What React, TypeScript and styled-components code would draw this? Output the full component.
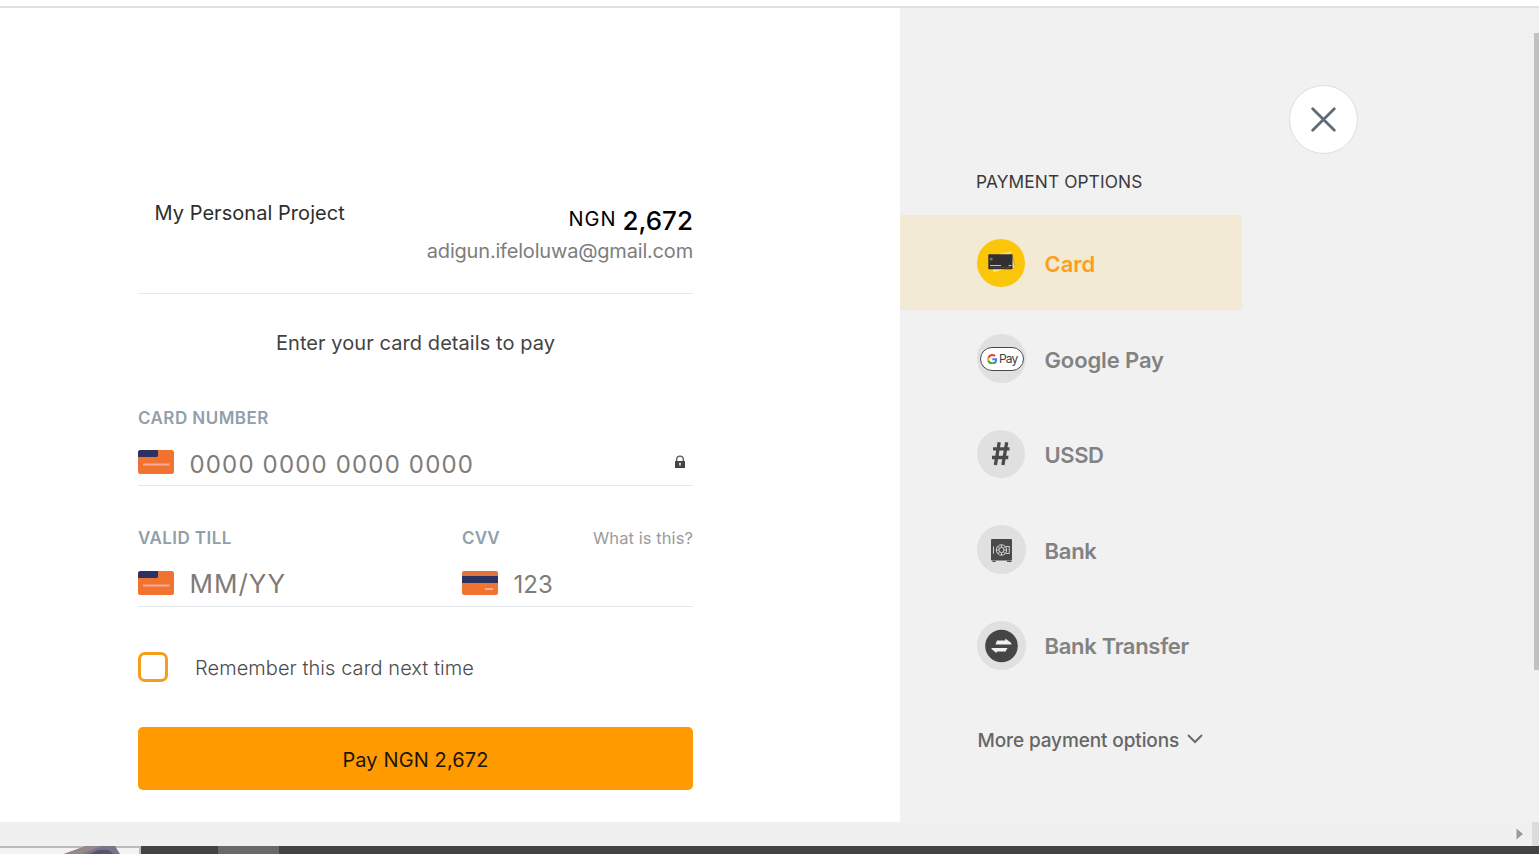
import React from 'react';
import styled, { createGlobalStyle } from 'styled-components';

const Global = createGlobalStyle`
  * { box-sizing: border-box; }
  html, body { margin: 0; height: 100%; overflow: hidden; }
  body { background: #fff; font-family: Inter, "Open Sans", sans-serif; }
  button { font: inherit; border: 0; padding: 0; background: none; text-align: left; }
  svg { display: block; flex: none; }
`;

const Page = styled.div`
  width: 1539px;
  height: 854px;
  display: flex;
  flex-direction: column;
  overflow: hidden;
`;

const TopStrip = styled.div`
  flex: none;
  height: 8px;
  background: #fff;
  border-bottom: 2px solid #e1e1e1;
`;

const Main = styled.main`
  flex: none;
  height: 814px;
  display: flex;
  background: #f1f1f1;
`;

const PayPanel = styled.section`
  width: 900px;
  background: #fff;
  padding: 186px 207px 0 138px;
  display: flex;
  flex-direction: column;
`;

const Text = styled.span<{ $size: number; $weight?: number; $color: string; $track?: number; $line?: number }>`
  font-size: ${p => p.$size}px;
  font-weight: ${p => p.$weight ?? 400};
  color: ${p => p.$color};
  letter-spacing: ${p => p.$track ?? 0}px;
  line-height: ${p => p.$line ?? 30}px;
  white-space: pre;
`;

const Summary = styled.header`
  height: 100px;
  display: flex;
  justify-content: space-between;
  align-items: flex-start;
  border-bottom: 1px solid #e6e8ea;
`;

const Merchant = styled.div`
  padding: 4px 0 0 16.5px;
  display: flex;
`;

const Totals = styled.div`
  padding-top: 11px;
  display: flex;
  flex-direction: column;
  align-items: flex-end;
`;

const Amount = styled.div`
  display: flex;
  align-items: flex-start;
  gap: 6px;
  height: 31px;
`;

const Currency = styled.div`
  display: flex;
  height: 28px;
`;

const Prompt = styled.p`
  margin: 34px 0 0;
  height: 30px;
  display: flex;
  justify-content: center;
`;

const Fields = styled.div<{ $top: number }>`
  margin-top: ${p => p.$top}px;
  display: flex;
`;

const Field = styled.label<{ $width?: number; $height: number }>`
  width: ${p => (p.$width ? `${p.$width}px` : 'auto')};
  flex: ${p => (p.$width ? 'none' : '1')};
  height: ${p => p.$height}px;
  display: flex;
  flex-direction: column;
  border-bottom: 1px solid #e2e8ec;
`;

const FieldHead = styled.div`
  height: 20px;
  display: flex;
  justify-content: space-between;
`;

const FieldBody = styled.div<{ $top: number }>`
  margin-top: ${p => p.$top}px;
  height: 24px;
  display: flex;
  align-items: center;
`;

const Value = styled.div<{ $drop?: number }>`
  flex: 1;
  padding: ${p => p.$drop ?? 0}px 0 0 15.5px;
  display: flex;
`;

const LockSlot = styled.div`
  width: 19px;
  display: flex;
`;

const Remember = styled.label`
  margin-top: 45px;
  height: 30px;
  display: flex;
  align-items: center;
  gap: 27px;
`;

const RememberLabel = styled.span`
  display: flex;
  padding-top: 2px;
`;

const Checkbox = styled.span`
  width: 30px;
  height: 30px;
  border: 3px solid #f59e1b;
  border-radius: 7px;
  background: #fff;
`;

const PayButton = styled.button`
  && {
    margin-top: 45px;
    height: 63px;
    padding-top: 3px;
    display: flex;
    align-items: center;
    justify-content: center;
    border-radius: 5px;
    background: #ff9b00;
  }
`;

const OptionsPanel = styled.aside`
  width: 342px;
  padding-top: 159px;
  display: flex;
  flex-direction: column;
`;

const OptionsTitle = styled.h2`
  margin: 0;
  height: 48px;
  padding-left: 76px;
  display: flex;
`;

const Option = styled.button<{ $active?: boolean }>`
  && {
    height: ${p => (p.$active ? 95 : 95.5)}px;
    margin-bottom: ${p => (p.$active ? 0.5 : 0)}px;
    padding: 2px 0 0 77px;
    display: flex;
    align-items: center;
    gap: 18.5px;
    background: ${p => (p.$active ? '#f2ead4' : 'transparent')};
    border-bottom: 1px solid ${p => (p.$active ? '#f2ead4' : '#efefef')};
  }
`;

const OptionIcon = styled.span<{ $bg: string; $size: number }>`
  flex: none;
  width: ${p => p.$size}px;
  height: ${p => p.$size}px;
  margin-right: ${p => 49 - p.$size}px;
  border-radius: 50%;
  background: ${p => p.$bg};
  display: flex;
  align-items: center;
  justify-content: center;
`;

const OptionLabel = styled.span`
  display: flex;
  padding-top: 2px;
`;

const More = styled.button`
  && {
    margin-top: 33px;
    padding-left: 77.5px;
    display: flex;
    align-items: center;
    gap: 8px;
  }
`;

const Chevron = styled.svg`
  margin-bottom: 3px;
`;

const CloseColumn = styled.div`
  flex: 1;
  padding: 77px 0 0 47px;
`;

const CloseButton = styled.button`
  && {
    width: 69px;
    height: 69px;
    border-radius: 50%;
    border: 1px solid #dedede;
    background: #fff;
    display: flex;
    align-items: center;
    justify-content: center;
  }
`;

const ScrollTrack = styled.div`
  width: 5px;
  padding-top: 25px;
`;

const ScrollThumb = styled.div`
  height: 637px;
  background: #c1c1c1;
`;

const HorizontalScroll = styled.div`
  flex: none;
  height: 24px;
  display: flex;
  align-items: center;
  justify-content: flex-end;
  gap: 9px;
  background: #f0f0f0;
`;

const Corner = styled.div`
  width: 7px;
  height: 24px;
  background: #dcdcdc;
`;

const BottomEdge = styled.footer`
  flex: 1;
  display: flex;
  background: #434343;
`;

const Thumbnail = styled.div`
  width: 141px;
  overflow: hidden;
  background: #f3f3f3;
  border-right: 2px solid #bcbcbc;
`;

const Tab = styled.div`
  margin-left: 77px;
  width: 61px;
  background: #696969;
`;

function CardFront() {
  return (
    <svg width="36" height="24" viewBox="0 0 36 24">
      <rect width="36" height="24" rx="2.5" fill="#f07330" />
      <path d="M2.5 0H20v5.5a1.5 1.5 0 0 1-1.5 1.5H0V2.5A2.5 2.5 0 0 1 2.5 0Z" fill="#2b3160" />
      <path d="M5 14.5h26.5" stroke="#fbab98" strokeWidth="2" />
    </svg>
  );
}

function CardBack() {
  return (
    <svg width="36" height="24" viewBox="0 0 36 24">
      <rect width="36" height="24" rx="2.5" fill="#f07330" />
      <path d="M0 5h36v7H0Z" fill="#2b3160" />
      <path d="M0 5V2.5A2.5 2.5 0 0 1 2.5 0h31A2.5 2.5 0 0 1 36 2.5V5Z" fill="#e0743b" />
      <path d="M23 18h8" stroke="#fbab98" strokeWidth="2" />
    </svg>
  );
}

function Lock() {
  return (
    <svg width="12" height="14" viewBox="0 0 12 14">
      <path d="M2.700 6.500V4.500a3.300 3.300 0 0 1 6.600 0v2" fill="none" stroke="#555" strokeWidth="1.300" />
      <rect x="1" y="6" width="10" height="7" rx=".5" fill="#444" />
      <circle cx="6" cy="8.800" r="1" fill="#eee" />
      <path d="M6 9v2" stroke="#eee" />
    </svg>
  );
}

function Cards() {
  return (
    <svg width="48" height="48" viewBox="0 0 48 48">
      <path d="M14 17 34 12.500 38.200 27.300 16.500 33Z" fill="#fdeaa6" />
      <path d="m34.500 14.500 3.300 12.600" stroke="#8a7430" strokeWidth=".6" />
      <path d="m26 14.700 8-1.700.6 2.200Z" fill="#f9d45a" />
      <rect x="11.300" y="15.200" width="24.200" height="15" rx=".8" fill="#332e30" />
      <path d="M13 26.500h11M31.500 26.500h3" stroke="#d9d4c8" strokeWidth=".9" />
      <path d="M13 28.400h21" stroke="#5b5550" strokeWidth=".7" />
      <rect x="12.800" y="18.800" width="2.800" height="2.800" rx=".8" fill="#77706f" />
    </svg>
  );
}

const GPayBadge = styled.span`
  flex: none;
  width: 44px;
  height: 24px;
  padding: 0 0 0 6px;
  display: flex;
  align-items: center;
  gap: 2px;
  border: 1px solid #4a4a4a;
  border-radius: 12px;
  background: #fff;
`;

function GooglePay() {
  return (
    <GPayBadge>
      <svg width="10.5" height="10.5" viewBox="0 0 18 18">
        <path d="M17.6 9.2c0-.6-.1-1.3-.2-1.8H9v3.4h4.8a4.1 4.1 0 0 1-1.8 2.7v2.3h2.9c1.7-1.6 2.7-3.9 2.7-6.6Z" fill="#4285f4" />
        <path d="M9 18c2.4 0 4.500-.8 6-2.200l-3-2.300c-.8.5-1.800.9-3 .9a5.300 5.300 0 0 1-5-3.700H1V13a9 9 0 0 0 8 5Z" fill="#34a853" />
        <path d="M4 10.700a5.400 5.400 0 0 1 0-3.400V5H1a9 9 0 0 0 0 8Z" fill="#fbbc05" />
        <path d="M9 3.600c1.300 0 2.500.5 3.400 1.300L15 2.300A9 9 0 0 0 1 5l3 2.300a5.300 5.300 0 0 1 5-3.700Z" fill="#ea4335" />
      </svg>
      <Text $size={12} $color="#3c4043" $line={22} $track={-0.9}>Pay</Text>
    </GPayBadge>
  );
}

function Hash() {
  return (
    <svg width="48" height="48" viewBox="0 0 48 48">
      <path d="M22.200 12.300 18.400 35M29.700 12.300 25.900 35M16 18.900h16.500M15 27.500h16.300" stroke="#4a4a4a" strokeWidth="3.300" fill="none" />
    </svg>
  );
}

function Safe() {
  return (
    <svg width="49" height="49" viewBox="0 0 49 49">
      <rect x="14" y="14" width="21" height="21.500" rx="1" fill="#4a4a4a" />
      <path d="M15.500 36.300h3M30 36.300h4.500" stroke="#4a4a4a" strokeWidth="1.300" />
      <g fill="none" stroke="#dcdcdc" strokeWidth=".9">
        <circle cx="24.500" cy="25" r="5.200" />
        <circle cx="24.500" cy="25" r="2.600" />
        <path d="m24.500 19.800v2.600M24.500 27.600v2.600M19.300 25h2.600M27.100 25h2.600M20.800 21.300l1.900 1.900M28.200 21.300l-1.900 1.900M20.800 28.700l1.900-1.900M28.200 28.700l-1.900-1.900" />
        <path d="M16.500 21.500v7M29 21.500h3.300v7H29" />
      </g>
    </svg>
  );
}

function Transfer() {
  return (
    <svg width="49" height="49" viewBox="0 0 49 49">
      <circle cx="24.500" cy="25" r="16.300" fill="#454545" />
      <path d="M20 19.600h8.300v-2.200l6 4.700v1.300H18.500ZM30.500 27h-16v1l5.200 4.200v-1.800h8.800Z" fill="#f1f1f1" />
    </svg>
  );
}

const options = [
  { label: 'Card', icon: <Cards />, bg: '#fbc60a', size: 48, track: 0 },
  { label: 'Google Pay', icon: <GooglePay />, bg: '#e0e0e0', size: 49, track: -0.12 },
  { label: 'USSD', icon: <Hash />, bg: '#e0e0e0', size: 48, track: -0.4 },
  { label: 'Bank', icon: <Safe />, bg: '#e0e0e0', size: 49, track: -0.25 },
  { label: 'Bank Transfer', icon: <Transfer />, bg: '#e0e0e0', size: 49, track: -0.3 },
];

export default function App() {
  return (
    <Page>
      <Global />
      <TopStrip />
      <Main>
        <PayPanel>
          <Summary>
            <Merchant>
              <Text $size={20} $color="#2d2d2d" $track={0.05}>My Personal Project</Text>
            </Merchant>
            <Totals>
              <Amount>
                <Currency>
                  <Text $size={20} $color="#000" $track={1} $line={28}>NGN</Text>
                </Currency>
                <Text $size={26} $weight={500} $color="#000" $line={32}>2,672</Text>
              </Amount>
              <Text $size={20} $color="#7d7d7d" $track={-0.19}>adigun.ifeloluwa@gmail.com</Text>
            </Totals>
          </Summary>
          <Prompt>
            <Text $size={20} $color="#434343" $track={0.07}>Enter your card details to pay</Text>
          </Prompt>
          <Fields $top={50}>
            <Field $height={78}>
              <FieldHead>
                <Text $size={17} $weight={600} $color="#919fab" $track={0.45} $line={20}>CARD NUMBER</Text>
              </FieldHead>
              <FieldBody $top={22}>
                <CardFront />
                <Value $drop={5}>
                  <Text $size={24} $color="#7f7b78" $track={1.16}>0000 0000 0000 0000</Text>
                </Value>
                <LockSlot><Lock /></LockSlot>
              </FieldBody>
            </Field>
          </Fields>
          <Fields $top={42}>
            <Field $width={324} $height={79}>
              <FieldHead>
                <Text $size={17} $weight={600} $color="#919fab" $track={0.42} $line={20}>VALID TILL</Text>
              </FieldHead>
              <FieldBody $top={23}>
                <CardFront />
                <Value $drop={1}>
                  <Text $size={26} $color="#7f7b78" $track={1}>MM/YY</Text>
                </Value>
              </FieldBody>
            </Field>
            <Field $height={79}>
              <FieldHead>
                <Text $size={17} $weight={600} $color="#919fab" $track={0.1} $line={20}>CVV</Text>
                <Text $size={16.5} $color="#9b9b9b" $track={0.08} $line={20}>What is this?</Text>
              </FieldHead>
              <FieldBody $top={23}>
                <CardBack />
                <Value $drop={3}>
                  <Text $size={24} $color="#7f7b78" $track={0}>123</Text>
                </Value>
              </FieldBody>
            </Field>
          </Fields>
          <Remember>
            <Checkbox />
            <RememberLabel>
              <Text $size={20} $weight={300} $color="#4c4c4c" $track={0.06}>Remember this card next time</Text>
            </RememberLabel>
          </Remember>
          <PayButton>
            <Text $size={20} $color="#1c1508" $track={0.12}>Pay NGN 2,672</Text>
          </PayButton>
        </PayPanel>
        <OptionsPanel>
          <OptionsTitle>
            <Text $size={17.3} $color="#3a3a3a" $track={0.12}>PAYMENT OPTIONS</Text>
          </OptionsTitle>
          {options.map((o, i) => (
            <Option key={o.label} $active={i === 0}>
              <OptionIcon $bg={o.bg} $size={o.size}>{o.icon}</OptionIcon>
              <OptionLabel>
                <Text $size={22} $weight={600} $color={i === 0 ? '#fb9f1c' : '#828282'} $track={o.track}>
                  {o.label}
                </Text>
              </OptionLabel>
            </Option>
          ))}
          <More>
            <Text $size={19} $weight={500} $color="#666" $track={-0.12}>More payment options</Text>
            <Chevron width="16" height="10" viewBox="0 0 16 10">
              <path d="m1 1 7 7 7-7" fill="none" stroke="#6b6b6b" strokeWidth="2" />
            </Chevron>
          </More>
        </OptionsPanel>
        <CloseColumn>
          <CloseButton aria-label="Close">
            <svg width="25" height="25" viewBox="0 0 25 25">
              <path d="m1.700 1.700 21.600 21.600M23.300 1.700 1.700 23.300" stroke="#5f6b7a" strokeWidth="2.800" strokeLinecap="round" />
            </svg>
          </CloseButton>
        </CloseColumn>
        <ScrollTrack>
          <ScrollThumb />
        </ScrollTrack>
      </Main>
      <HorizontalScroll>
        <svg width="7" height="12" viewBox="0 0 7 12">
          <path d="M.500 .500 7 6 .500 11.500Z" fill="#9a9a9a" />
        </svg>
        <Corner />
      </HorizontalScroll>
      <BottomEdge>
        <Thumbnail>
          <svg width="139" height="8" viewBox="0 0 139 8">
            <path d="M0 0h139v2H0Z" fill="#bcbcbc" />
            <path d="M64 8 86 0h29l5 8Z" fill="#7b7488" />
            <path d="M64 8 86 0h16L82 8Z" fill="#95878a" />
            <path d="m90 8 8-4h10l6 4Z" fill="#57546f" />
          </svg>
        </Thumbnail>
        <Tab />
      </BottomEdge>
    </Page>
  );
}
